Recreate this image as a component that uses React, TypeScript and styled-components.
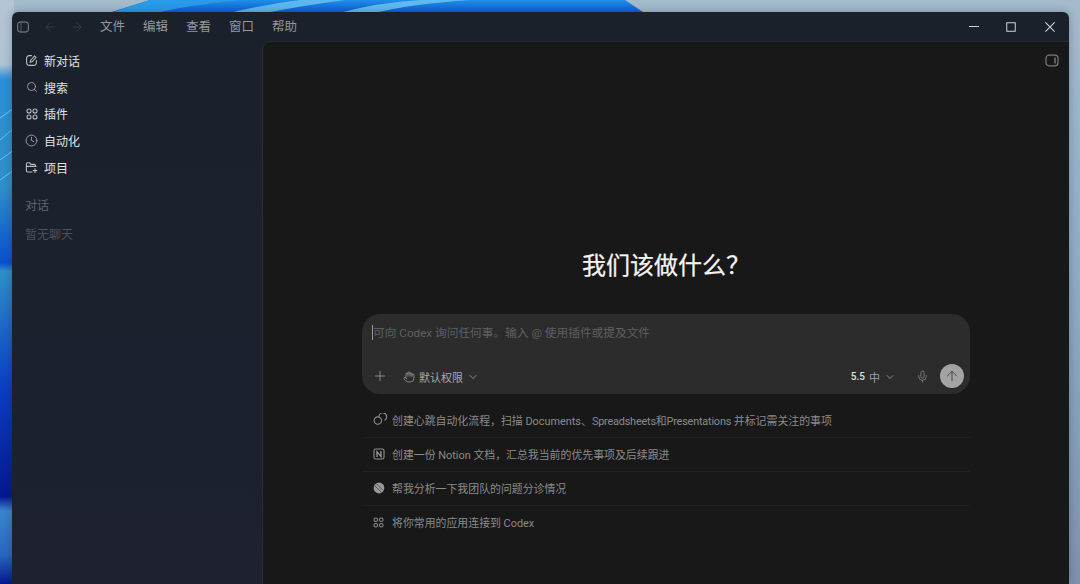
import { createGlobalStyle } from "styled-components";
import styled from "styled-components";
import {
  ArrowLeft,
  ArrowRight,
  ArrowUp,
  ChevronDown,
  Clock,
  Hand,
  Mic,
  Plus,
  Search,
} from "lucide-react";

const GlobalStyle = createGlobalStyle`
  html, body {
    margin: 0;
    height: 100%;
    overflow: hidden;
    background: #9db4c8;
  }
  * {
    box-sizing: border-box;
  }
  body {
    font-family: Roboto, "Noto Sans CJK SC", sans-serif;
  }
`;

const Desktop = styled.div`
  position: relative;
  width: 1080px;
  height: 584px;
  padding: 12px 11px 0 12px;
  overflow: hidden;
  background: linear-gradient(180deg, #a4bbcc 0%, #8fadc6 45%, #7d93ab 100%);
`;

const Wallpaper = styled.svg`
  position: absolute;
  left: 0;
  top: 0;
`;

const Window = styled.div`
  position: relative;
  display: grid;
  grid-template-rows: 29px 1fr;
  height: 100%;
  border-radius: 6px 6px 0 0;
  background: linear-gradient(180deg, #1a212b 0%, #1d2130 100%);
  overflow: hidden;
  box-shadow: 0 0 8px rgba(20, 30, 50, 0.3);
`;

const TitleBar = styled.div`
  display: flex;
  align-items: center;
  padding-left: 5px;
`;

const NavIcons = styled.div`
  display: flex;
  align-items: center;
  gap: 13px;
  color: #3f444c;
  margin: 0 16px 0 14px;
`;

const MenuBar = styled.div`
  display: flex;
  gap: 18px;
  padding-top: 1px;
`;

const MenuItem = styled.span`
  font-size: 12.5px;
  line-height: 16px;
  color: #95989d;
`;

const WindowButtons = styled.div`
  display: flex;
  align-items: center;
  margin-left: auto;
  color: #cfd2d5;
`;

const WindowButton = styled.span`
  display: flex;
  justify-content: center;
  width: 38.5px;

  &:first-child {
    width: 36px;
  }
`;

const Body = styled.div`
  display: grid;
  grid-template-columns: 250px 1fr;
  min-height: 0;
`;

const Sidebar = styled.aside`
  padding: 6px 13px 0 13px;
`;

const NavList = styled.nav`
  display: flex;
  flex-direction: column;
`;

const NavRow = styled.div`
  display: flex;
  align-items: center;
  gap: 6px;
  height: 26.8px;
  color: #b9bcc1;
`;

const NavIconSlot = styled.span`
  display: flex;
  justify-content: center;
  width: 13px;
`;

const NavLabel = styled.span`
  font-size: 12px;
  color: #e0e2e5;
`;

const SectionLabel = styled.div`
  margin-top: 16px;
  font-size: 12px;
  line-height: 18px;
  color: #60656d;
`;

const EmptyLabel = styled.div`
  margin-top: 11px;
  font-size: 12px;
  line-height: 18px;
  color: #4b5059;
`;

const Main = styled.main`
  position: relative;
  display: flex;
  flex-direction: column;
  align-items: center;
  padding-top: 206px;
  background: #181818;
  border-top: 1px solid #252a31;
  border-left: 1px solid #2a2e36;
  border-top-left-radius: 9px;
`;

const PanelToggle = styled.span`
  position: absolute;
  top: 12px;
  right: 10px;
  display: flex;
  color: #7a7a7a;
`;

const Heading = styled.h1`
  margin: 0 0 30px;
  font-size: 24px;
  line-height: 36px;
  font-weight: 400;
  color: #f4f4f4;
  -webkit-text-stroke: 0.25px #f4f4f4;
`;

const Composer = styled.div`
  display: flex;
  flex-direction: column;
  justify-content: space-between;
  width: 608px;
  height: 80px;
  padding: 11px 6px 6px 10px;
  border-radius: 18px;
  background: #2c2c2c;
`;

const Placeholder = styled.div`
  height: 15px;
  font-size: 11.7px;
  line-height: 17px;
  color: #5f5f5f;
  border-left: 1px solid #9a9a9a;
`;

const ComposerBar = styled.div`
  display: flex;
  align-items: center;
`;

const AddButton = styled.span`
  display: flex;
  color: #a0a0a0;
  margin: 0 15px 0 0;
`;

const PermissionButton = styled.span`
  display: flex;
  align-items: center;
  gap: 4px;
  padding-top: 1px;
  font-size: 11px;
  color: #a8a8a8;
`;

const ModelButton = styled.span`
  display: flex;
  align-items: center;
  gap: 4px;
  margin-left: auto;
  padding-top: 1px;
  color: #a0a0a0;
  font-size: 11px;
`;

const ModelVersion = styled.b`
  font-size: 10px;
  font-weight: 500;
  color: #e0e0e0;
`;

const MicButton = styled.span`
  display: flex;
  color: #8c8c8c;
  margin: 0 11px 0 20px;
`;

const SendButton = styled.span`
  display: flex;
  align-items: center;
  justify-content: center;
  width: 24px;
  height: 24px;
  border-radius: 50%;
  background: #a3a3a3;
  color: #3a3a3a;
`;

const Suggestions = styled.ul`
  width: 608px;
  margin: 10px 0 0;
  padding: 0;
  list-style: none;
`;

const Suggestion = styled.li`
  display: flex;
  align-items: center;
  gap: 6px;
  height: 34px;
  padding: 0 0 2px 11px;
  font-size: 10.9px;
  color: #8b8b8b;
  border-bottom: 1px solid #202020;

  &:last-child {
    border-bottom: none;
  }
`;

const SuggestionIcon = styled.span`
  display: flex;
  flex: none;
  width: 13px;
  color: #8f8f8f;
`;

const TightWords = styled.span`
  letter-spacing: -0.2px;
`;

const EditIcon = () => (
  <svg width="13" height="13" viewBox="0 0 13 13" fill="none" stroke="currentColor" strokeWidth="1.1" strokeLinecap="round">
    <path d="M6.5 1.6H4.2A2.6 2.6 0 0 0 1.6 4.2v4.6a2.6 2.6 0 0 0 2.6 2.6h4.6a2.6 2.6 0 0 0 2.6-2.6V6.5" />
    <path d="M9.4 2 11 3.6 7.1 7.8l-1.9.5.5-1.9z" />
  </svg>
);

const AppsIcon = ({ size = 12 }: { size?: number }) => (
  <svg width={size} height={size} viewBox="0 0 12 12" fill="none" stroke="currentColor" strokeWidth="1.1">
    <circle cx="3" cy="3" r="2" />
    <circle cx="9" cy="3" r="2" />
    <circle cx="3" cy="9" r="2" />
    <circle cx="9" cy="9" r="2" />
  </svg>
);

const FolderAddIcon = () => (
  <svg width="13" height="13" viewBox="0 0 13 13" fill="none" stroke="currentColor" strokeWidth="1.1" strokeLinecap="round">
    <path d="M7 11H2.6A1.2 1.2 0 0 1 1.4 9.8V2.8A1 1 0 0 1 2.4 1.8h2.2l1.2 1.6h3.6a1 1 0 0 1 1 1v1" />
    <path d="M1.6 5.4H11" />
    <path d="M10 7.8v3.6M8.2 9.6h3.6" />
  </svg>
);

const SidebarToggleIcon = () => (
  <svg width="12" height="12" viewBox="0 0 12 12" fill="none" stroke="#8a8e94" strokeWidth="1">
    <rect x="0.7" y="1" width="10.6" height="10" rx="2.4" />
    <path d="M4 1.2v9.6" stroke="#5a5e64" />
  </svg>
);

const MinimizeIcon = () => (
  <svg width="10" height="10" viewBox="0 0 10 10" stroke="currentColor" strokeWidth="1">
    <path d="M0 4.5h10" />
  </svg>
);

const MaximizeIcon = () => (
  <svg width="10" height="10" viewBox="0 0 10 10" fill="none" stroke="currentColor" strokeWidth="1">
    <rect x="0.75" y="0.75" width="8.5" height="8.5" />
  </svg>
);

const CloseIcon = () => (
  <svg width="10" height="10" viewBox="0 0 10 10" stroke="currentColor" strokeWidth="1.1">
    <path d="M0.4 0.4 9.6 9.6M9.6 0.4 0.4 9.6" />
  </svg>
);

const RightPanelIcon = () => (
  <svg width="14" height="13" viewBox="0 0 14 13" fill="none" stroke="currentColor" strokeWidth="1.2">
    <rect x="1" y="1.2" width="12" height="10.6" rx="3" />
    <path d="M10 3.6v5.8" strokeWidth="1.4" />
  </svg>
);

const HeartbeatIcon = () => (
  <svg width="15" height="13" viewBox="0 0 15 13" fill="none" stroke="currentColor" strokeWidth="1.1" strokeLinecap="round" style={{ flex: "none" }}>
    <circle cx="4.8" cy="7.6" r="3.7" />
    <path d="M6 3.1A3.7 3.7 0 0 1 13.6 4.2c0 1.3-.7 2.3-1.7 2.9" />
  </svg>
);

const NotionIcon = () => (
  <svg width="12" height="12" viewBox="0 0 12 12" fill="none">
    <rect x="1" y="1" width="10" height="10" rx="1.6" stroke="#8f8f8f" strokeWidth="1.1" />
    <path d="M4 9V3.6L8 8.6V3" stroke="#a0a0a0" strokeWidth="1.2" />
  </svg>
);

const LinearIcon = () => (
  <svg width="12" height="12" viewBox="0 0 12 12">
    <circle cx="6" cy="6" r="5.4" fill="#9a9a9a" />
    <path d="M1.5 3.5 8.5 10.5M3.4 1.7 10.3 8.6" stroke="#4d4d4d" strokeWidth="0.9" />
  </svg>
);

const navItems = [
  { icon: <EditIcon />, label: "新对话" },
  { icon: <Search size={12} strokeWidth={1.5} />, label: "搜索" },
  { icon: <AppsIcon />, label: "插件" },
  { icon: <Clock size={13} strokeWidth={1.4} />, label: "自动化" },
  { icon: <FolderAddIcon />, label: "项目" },
];

const suggestions = [
  {
    id: "heartbeat",
    icon: <HeartbeatIcon />,
    text: (
      <span>
        创建心跳自动化流程，扫描 Documents、<TightWords>Spreadsheets和Presentations</TightWords> 并标记需关注的事项
      </span>
    ),
  },
  { id: "notion", icon: <NotionIcon />, text: "创建一份 Notion 文档，汇总我当前的优先事项及后续跟进" },
  { id: "triage", icon: <LinearIcon />, text: "帮我分析一下我团队的问题分诊情况" },
  { id: "connect", icon: <AppsIcon size={11} />, text: "将你常用的应用连接到 Codex" },
];

const menus = ["文件", "编辑", "查看", "窗口", "帮助"];

const App = () => {
  return (
    <Desktop>
      <GlobalStyle />
      <Wallpaper width="1080" height="584" viewBox="0 0 1080 584">
        <defs>
          <linearGradient id="bloom" x1="0" y1="0" x2="0" y2="1">
            <stop offset="0" stopColor="#1f8fe6" />
            <stop offset="1" stopColor="#0a55d8" />
          </linearGradient>
          <linearGradient id="edge" x1="0" y1="0" x2="0" y2="1">
            <stop offset="0" stopColor="#b4c6d4" />
            <stop offset="0.11" stopColor="#b0c4d4" />
            <stop offset="0.135" stopColor="#2b8fd9" />
            <stop offset="0.32" stopColor="#2f8fc8" />
            <stop offset="0.45" stopColor="#0a4fd0" />
            <stop offset="0.465" stopColor="#2f8fc8" />
            <stop offset="0.66" stopColor="#0b3fc4" />
            <stop offset="0.85" stopColor="#04188f" />
            <stop offset="0.875" stopColor="#3a86cc" />
            <stop offset="0.95" stopColor="#2a66c0" />
            <stop offset="1" stopColor="#04188f" />
          </linearGradient>
        </defs>
        <path d="M0 0H14V584H0Z" fill="url(#edge)" />
        <path d="M105 14 L150 0 H625 L646 14 Z" fill="url(#bloom)" />
        <path d="M108 14 Q130 6 150 0 H240 Q195 4 150 14Z" fill="#2a9be8" />
        <path d="M225 14 Q260 5 300 0 H345 Q300 6 260 14Z" fill="#5cb8ee" />
        <path d="M335 14 Q380 2 420 0 H470 Q410 4 370 14Z" fill="#60baf0" />
        <path d="M0 118 L14 108 M0 140 L14 128 M0 160 L14 150 M0 180 L14 170" stroke="#8ccdf0" strokeWidth="0.8" fill="none" />
      </Wallpaper>
      <Window>
        <TitleBar>
          <SidebarToggleIcon />
          <NavIcons>
            <ArrowLeft size={14} strokeWidth={1.3} />
            <ArrowRight size={14} strokeWidth={1.3} />
          </NavIcons>
          <MenuBar>
            {menus.map((menu) => (
              <MenuItem key={menu}>{menu}</MenuItem>
            ))}
          </MenuBar>
          <WindowButtons>
            <WindowButton>
              <MinimizeIcon />
            </WindowButton>
            <WindowButton>
              <MaximizeIcon />
            </WindowButton>
            <WindowButton>
              <CloseIcon />
            </WindowButton>
          </WindowButtons>
        </TitleBar>
        <Body>
          <Sidebar>
            <NavList>
              {navItems.map((item) => (
                <NavRow key={item.label}>
                  <NavIconSlot>{item.icon}</NavIconSlot>
                  <NavLabel>{item.label}</NavLabel>
                </NavRow>
              ))}
            </NavList>
            <SectionLabel>对话</SectionLabel>
            <EmptyLabel>暂无聊天</EmptyLabel>
          </Sidebar>
          <Main>
            <PanelToggle>
              <RightPanelIcon />
            </PanelToggle>
            <Heading>我们该做什么？</Heading>
            <Composer>
              <Placeholder>可向 Codex 询问任何事。输入 @ 使用插件或提及文件</Placeholder>
              <ComposerBar>
                <AddButton>
                  <Plus size={16} strokeWidth={1.2} />
                </AddButton>
                <PermissionButton>
                  <Hand size={12} strokeWidth={1.4} />
                  默认权限
                  <ChevronDown size={12} strokeWidth={1.6} />
                </PermissionButton>
                <ModelButton>
                  <ModelVersion>5.5</ModelVersion>
                  中
                  <ChevronDown size={12} strokeWidth={1.6} />
                </ModelButton>
                <MicButton>
                  <Mic size={13} strokeWidth={1.4} />
                </MicButton>
                <SendButton>
                  <ArrowUp size={16} strokeWidth={1.3} />
                </SendButton>
              </ComposerBar>
            </Composer>
            <Suggestions>
              {suggestions.map((item) => (
                <Suggestion key={item.id}>
                  <SuggestionIcon>{item.icon}</SuggestionIcon>
                  {item.text}
                </Suggestion>
              ))}
            </Suggestions>
          </Main>
        </Body>
      </Window>
    </Desktop>
  );
};

export default App;
